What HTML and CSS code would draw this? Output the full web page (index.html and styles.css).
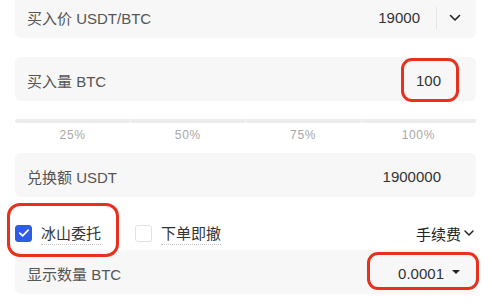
FILE: index.html
```html
<!DOCTYPE html>
<html lang="zh-CN">
<head>
<meta charset="utf-8">
<title>冰山委托</title>
<link rel="stylesheet" href="styles.css">
</head>
<body>
<div class="wrap">
  <div class="field field-first">
    <span class="label">买入价 USDT/BTC</span>
    <span class="value">19000</span>
    <span class="divider"></span>
    <svg class="chev" width="12" height="8" viewBox="0 0 12 8"><polyline points="1.5,1.5 6,6 10.5,1.5" fill="none" stroke="#222" stroke-width="1.6" stroke-linecap="round" stroke-linejoin="round"/></svg>
  </div>

  <div class="field field-gap">
    <span class="label">买入量 BTC</span>
    <span class="value">100</span>
  </div>

  <div class="slider">
    <span class="seg"></span><span class="seg"></span><span class="seg"></span><span class="seg"></span>
  </div>
  <div class="marks">
    <span>25%</span><span>50%</span><span>75%</span><span>100%</span>
  </div>

  <div class="field field-total">
    <span class="label">兑换额 USDT</span>
    <span class="value">1900000</span>
  </div>

  <div class="options">
    <label class="opt">
      <span class="box checked"><svg width="12" height="10" viewBox="0 0 12 10"><polyline points="1.8,5.2 4.6,7.8 10.2,2.2" fill="none" stroke="#fff" stroke-width="1.8" stroke-linecap="round" stroke-linejoin="round"/></svg></span>
      <span class="opt-text">冰山委托</span>
    </label>
    <label class="opt opt-second">
      <span class="box"></span>
      <span class="opt-text">下单即撤</span>
    </label>
    <span class="fee">手续费<svg width="12" height="8" viewBox="0 0 12 8"><polyline points="2,2 6,6 10,2" fill="none" stroke="#222" stroke-width="1.5" stroke-linecap="round" stroke-linejoin="round"/></svg></span>
  </div>

  <div class="field field-show">
    <span class="label">显示数量 BTC</span>
    <span class="value">0.0001</span>
    <span class="caret"></span>
  </div>
</div>

<div class="mark mark-amount"></div>
<div class="mark mark-iceberg"></div>
<div class="mark mark-show"></div>
</body>
</html>
```

FILE: styles.css
```css
html, body {
  margin: 0;
  padding: 0;
  background: #ffffff;
}
body {
  width: 492px;
  height: 308px;
  overflow: hidden;
  position: relative;
  font-family: "Liberation Sans", "Noto Sans CJK SC", sans-serif;
  font-size: 15px;
  color: #333;
}
.wrap {
  padding: 0 16px 0 15px;
}
.field {
  height: 44px;
  box-sizing: border-box;
  background: #f7f7f7;
  border-radius: 6px;
  display: flex;
  align-items: center;
  padding: 3px 35px 0 12px;
}
.label {
  color: #555;
  flex: 1;
  white-space: nowrap;
}
.value {
  color: #333;
}
.field-first {
  margin-top: -6px;
  padding-right: 15px;
}
.divider {
  width: 1px;
  height: 22px;
  background: #e6e6e6;
  margin: 0 12px 0 16px;
}
.chev {
  display: block;
}
.field-gap {
  margin-top: 19px;
}
.slider {
  margin-top: 18px;
  height: 4px;
  display: flex;
  gap: 1px;
  background: #f6f6f6;
  border-radius: 2px;
}
.seg {
  flex: 1;
  background: #ececec;
}
.seg:first-child {
  border-radius: 2px 0 0 2px;
}
.seg:last-child {
  border-radius: 0 2px 2px 0;
}
.marks {
  display: flex;
  margin-top: 5px;
  height: 14px;
  line-height: 14px;
  font-size: 12px;
  color: #a8a8a8;
  letter-spacing: 0.7px;
}
.marks span {
  flex: 1;
  text-align: center;
}
.field-total {
  margin-top: 11px;
}
.options {
  margin-top: 27px;
  height: 18px;
  display: flex;
  align-items: center;
}
.opt {
  display: flex;
  align-items: center;
}
.box {
  width: 17px;
  height: 17px;
  box-sizing: border-box;
  border-radius: 3px;
  border: 1.5px solid #e2e2e2;
  background: #fff;
  display: flex;
  align-items: center;
  justify-content: center;
}
.box.checked {
  background: #2e5ce6;
  border-color: #2e5ce6;
}
.opt-text {
  margin-left: 9px;
  color: #333;
  line-height: 18px;
  border-bottom: 1px dotted #c4c4c4;
  margin-top: 3px;
  padding-bottom: 1px;
}
.opt-second {
  margin-left: 34px;
}
.fee {
  margin-left: auto;
  display: flex;
  align-items: center;
  color: #222;
  margin-right: 1px;
}
.fee svg {
  margin-left: 2px;
}
.field-show {
  margin-top: 8px;
  padding-right: 16px;
}
.caret {
  width: 0;
  height: 0;
  border-left: 4px solid transparent;
  border-right: 4px solid transparent;
  border-top: 4.5px solid #222;
  margin-left: 8px;
  margin-bottom: 3px;
}
.mark {
  position: absolute;
  box-sizing: border-box;
  border: 3px solid #e9301d;
}
.mark-amount {
  left: 401px;
  top: 58px;
  width: 58px;
  height: 44px;
  border-radius: 11px;
}
.mark-iceberg {
  left: 7px;
  top: 203px;
  width: 112px;
  height: 54px;
  border-radius: 13px;
}
.mark-show {
  left: 367px;
  top: 252px;
  width: 112px;
  height: 38px;
  border-radius: 11px;
}
```
